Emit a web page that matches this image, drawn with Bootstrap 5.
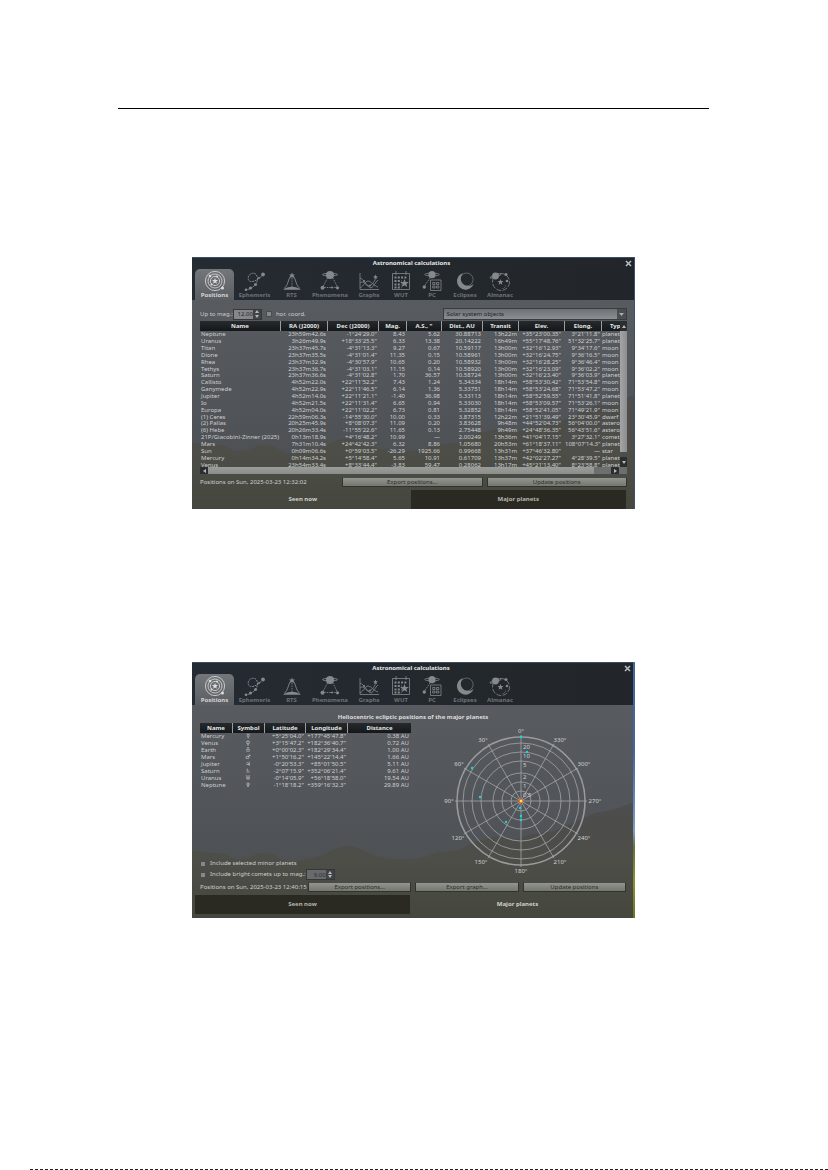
<!DOCTYPE html>
<html lang="en">
<head>
<meta charset="utf-8">
<meta name="viewport" content="width=device-width, initial-scale=1">
<title>Astronomical calculations</title>
<link href="https://cdn.jsdelivr.net/npm/bootstrap@5.3.0/dist/css/bootstrap.min.css" rel="stylesheet">
<style>
  body { background: #fff; font-family: "Noto Sans", "DejaVu Sans", sans-serif; font-size: 6px; line-height: 7px; color: #cdcfd0; }
  button, input, select { font: inherit; }
  .sheet { width: 100%; max-width: 829px; padding: 108px 119px 0 118px; }
  .rule { border-top: 1px solid #000; }
  .foot-rule { border-top: 1px dashed #222; margin-left: 30px; }
  .win { width: 100%; max-width: 443px; border-right: 1px solid #3c5068;
    background: url("data:image/svg+xml,%3Csvg xmlns='http://www.w3.org/2000/svg' viewBox='0 0 443 254' preserveAspectRatio='none'%3E%3Cdefs%3E%3ClinearGradient id='g' x2='0' y2='1'%3E%3Cstop offset='.15' stop-color='%23585b5f'/%3E%3Cstop offset='.65' stop-color='%23505357'/%3E%3Cstop offset='1' stop-color='%234c4e50'/%3E%3C/linearGradient%3E%3ClinearGradient id='h' x2='0' y2='1'%3E%3Cstop offset='0' stop-color='%234c4d4d'/%3E%3Cstop offset='.5' stop-color='%234d4e48'/%3E%3Cstop offset='1' stop-color='%2345463d'/%3E%3C/linearGradient%3E%3C/defs%3E%3Cpath fill='url(%23g)' d='M0 0h443v254H0z'/%3E%3Cpath fill='url(%23h)' d='M0 187l14 2 18 1 12 6 14-2 10-5 14 2 12 7 16-1 20-5 14-7 14-3 12 4 16 7 20 3 22-1 18-6 20-2 20-9 20-5 18 4 16-6 24-3 22-10 18-8 21-4 22-8v116H0z'/%3E%3C/svg%3E") center / 100% 100%; }
  .win-edge { border-right: 2px solid; border-image: linear-gradient(#41669c 0 35%, #7f9cc0 66%, #66713f 72%, #8a922c 86%, #6c7024) 1; }
  .win-top { background: linear-gradient(90deg, #252b32, #22262a); border-top: 1px solid #3b4e63; }
  .win-title { height: 11px; color: #e6e8e9; padding-left: 8px; }
  .close-x { width: 11px; height: 11px; padding: 2px; border: 0; background: none; color: #b9bec2; line-height: 0; }
  .tabs { display: grid; grid-template-columns: 39px 41px 33px 44px 34px 30px 32px 34px 36px; padding-left: 3px; }
  .tab-btn { height: 31px; padding: 0; border: 0; background: none; color: #6d7276; font-weight: 700; white-space: nowrap; overflow: visible; }
  .tab-btn svg { width: 22px; height: 22px; color: #85898c; display: block; margin: 0 auto; }
  .tab-btn.active { background: linear-gradient(#74777a, #5a5d61); border-radius: 5px 5px 0 0; color: #d2d4d5; }
  .tab-btn.active svg { color: #dcdddd; }
  .body-pad { padding: 0 7px 0 8px; }
  .ctl-row { height: 12px; margin-top: 8px; }
  .spin { width: 29px; height: 11px; border: 1px solid #35383a; background: #77797b; }
  .spin input { width: 19px; min-width: 0; padding: 0; border: 0; text-align: right; background: #85878a; color: #24272a; height: 9px; outline: 0; }
  .spin.off input { background: #686a6c; color: #2d2f31; }
  .spin .steps { width: 8px; background: #414446; color: #b5b7b8; }
  .steps button { border: 0; padding: 0; background: none; color: inherit; line-height: 0; flex: 1; }
  .tick { appearance: none; width: 6px; height: 6px; margin: 0; border: 1px solid #4a4d4f; background: #85878a; }
  .combo { width: 43%; height: 12px; padding: 0 14px 0 2px; border: 1px solid #3a3d40; border-radius: 0; color: #212427; appearance: none; line-height: 9px;
    background: url("data:image/svg+xml,%3Csvg xmlns='http://www.w3.org/2000/svg' width='9' height='10'%3E%3Cpath fill='%234b4e51' d='M0 0h9v10H0z'/%3E%3Cpath fill='%23a9abad' d='M2 4h5L4.500 7z'/%3E%3C/svg%3E") right / 9px 10px no-repeat, linear-gradient(#6d7074, #8b8e93); }
  .grid-tbl { table-layout: fixed; border-collapse: separate; border-spacing: 0; line-height: 6px; }
  .grid-tbl td { padding: 0 2px 0 0; text-align: right; white-space: nowrap; }
  .grid-tbl td:first-child { padding: 0 0 0 1px; text-align: left; }
  .grid-tbl th { height: 10px; padding: 0; background: linear-gradient(#262a2d, #15181a); color: #e4e5e6; text-align: center; border-right: 1px solid #9a9c9e; white-space: nowrap; }
  .grid-tbl th:last-child { border-right: 0; }
  .bodies { width: 442px; height: 147px; }
  .bodies td:nth-child(8) { padding-right: 4px; }
  .bodies td:last-child { text-align: left; }
  .bodies th:last-child { text-align: left; padding-left: 8px; }
  .clip { overflow: hidden; height: 146px; min-width: 0; }
  .vbar { width: 7px; }
  .hbar { height: 7px; background: #6d6f6e; }
  .arrow-btn { border: 0; padding: 0; width: 8px; height: 8px; flex: none; background: #2b2e30; color: #b8babb; line-height: 0; }
  .vbar .arrow-btn { width: 7px; height: 10px; }
  .hbar .arrow-btn { height: 7px; }
  .thumb-v { background: linear-gradient(90deg, #a3a5a6, #8b8d8e); flex: 0 0 121px; }
  .thumb-h { background: linear-gradient(#9b9d9b, #8b8d8a); flex: 0 0 386px; }
  .push { height: 10px; padding: 0; border: 1px solid #31332f; border-top-color: #4a4c48; border-radius: 0; background: linear-gradient(#92948f, #74766f); color: #2b2d2a; line-height: 7px; flex: 1; }
  .status { white-space: nowrap; }
  .status-one { flex: 0 0 142px; }
  .status-two { flex: 0 0 108px; }
  .view-tabs { margin: 0 8px 0 3px; padding-top: 3px; }
  .view-tabs button { flex: 1; height: 19px; border: 0; padding: 0; font-weight: 700; background: transparent; color: #cfd0cb; }
  .view-tabs button.dim { background: #2a2a23; color: #b4b5ad; }
  .majors { width: 211px; height: 65px; }
  .majors td:nth-child(2) { text-align: center; font-family: "DejaVu Sans", sans-serif; }
  .majors-col { flex: 0 0 211px; padding-bottom: 2px; }
  .heading { height: 18px; padding-top: 9px; color: #dcddde; }
  .chart { width: 170px; height: 159px; }
  .chart text { fill: #cfd1d2; font-size: 6px; }
</style>
</head>
<body class="d-flex flex-column min-vh-100">
<svg class="d-none" aria-hidden="true">
  <symbol id="i-positions" viewBox="0 0 22 22"><g fill="none" stroke="currentColor" stroke-width=".8"><circle cx="11" cy="11" r="9.600"/><circle cx="11" cy="11" r="7"/><circle cx="11" cy="11" r="4.600"/></g><path fill="currentColor" d="m11 8 .8 2.100h2.200l-1.700 1.400.6 2.200-1.900-1.200-1.900 1.200.6-2.200L8 10.100h2.200z"/><g fill="currentColor"><circle cx="6" cy="6" r="1.300"/><circle cx="13" cy="6.500" r="1"/><circle cx="18.500" cy="18" r="1.500"/><circle cx="7.500" cy="14.500" r="1"/></g></symbol>
  <symbol id="i-ephemeris" viewBox="0 0 22 22"><path fill="none" stroke="currentColor" stroke-width="1" stroke-dasharray="2 .8" d="M1.500 20C8 19 14 14 13.500 8 13 4 10.500 2.500 7.500 3.500 3.500 5 3 10.500 6.500 11.500c4 .8 8.500-3 13-7"/><g fill="currentColor"><circle cx="2" cy="19.800" r="1.300"/><circle cx="6.500" cy="18" r="1.500"/><circle cx="11.500" cy="14.500" r="1.500"/><circle cx="19" cy="4.500" r="1.900"/><circle cx="15" cy="8" r="1"/></g></symbol>
  <symbol id="i-rts" viewBox="0 0 22 22"><path fill="none" stroke="currentColor" d="M3 18.500C7.500 16 7.500 5.500 11 5.500S14.500 16 19 18.500" stroke-width=".9"/><path fill="none" stroke="currentColor" stroke-dasharray="1.500 1" d="M11 8v9" stroke-width=".8"/><path fill="currentColor" d="M2 19.800c5-4 13-4 18 0zM11 2.500l.8 2.100h2.200l-1.700 1.400.6 2.200L11 7l-1.900 1.200.6-2.200L8 4.600h2.200z"/></symbol>
  <symbol id="i-phenomena" viewBox="0 0 22 22"><path fill="none" stroke="currentColor" stroke-dasharray="1.500 1" d="M8.500 8 3.500 17.500h15L14 8" stroke-width=".9"/><g fill="currentColor"><circle cx="11" cy="5" r="4"/><circle cx="3.500" cy="17.800" r="2"/><circle cx="18.500" cy="17.800" r="1.600"/><circle cx="13" cy="17.500" r="1"/></g><ellipse cx="11" cy="4.600" rx="7.500" ry="1.300" fill="none" stroke="currentColor" stroke-width=".9"/></symbol>
  <symbol id="i-graphs" viewBox="0 0 22 22"><path fill="none" stroke="currentColor" stroke-width=".8" d="M2 3v16.500h19M2 8c4 1 7 9 11 10 3-1 4-6 7-8M2 18c4-2 5-7 8-7s6 5 10 6M2 13c4-3 5 2 8 3s6-4 8-8"/><g fill="currentColor"><path d="m17.500 4.500.7 1.700H20l-1.400 1.100.5 1.800-1.600-1-1.600 1 .5-1.800L15 6.200h1.800z"/><circle cx="6" cy="11" r="1"/><circle cx="12" cy="15.500" r="1"/></g></symbol>
  <symbol id="i-wut" viewBox="0 0 22 22"><path fill="none" stroke="currentColor" d="M2.500 3.500h17v16h-17zM6 1v4M16 1v4" stroke-width=".8"/><path fill="none" stroke="currentColor" stroke-width="2" stroke-dasharray="2 1.300" d="M4.500 7.500h13M4.500 11h7M4.500 14.500h7M4.500 17.500h7"/><path fill="currentColor" d="m14.500 9 1.200 3h3.200l-2.500 2 .9 3.100-2.800-1.800-2.800 1.800.9-3.100-2.500-2h3.200z"/></symbol>
  <symbol id="i-pc" viewBox="0 0 22 22"><path fill="none" stroke="currentColor" stroke-width=".8" d="M9.500 10h10.500v10.500H9.500zM11.700 12.500h2.300v2h-2.300zM15.500 12.500h2.300v2h-2.300zM11.700 16h2.300v2h-2.300zM15.500 16h2.300v2h-2.300z"/><path fill="none" stroke="currentColor" stroke-dasharray="1.500 1" d="M9 8 3.500 16" stroke-width=".9"/><g fill="currentColor"><circle cx="11" cy="4.700" r="3.600"/><circle cx="3.300" cy="17" r="1.700"/></g><ellipse cx="11" cy="4.500" rx="7.300" ry="1.400" fill="none" stroke="currentColor" stroke-width=".8"/></symbol>
  <symbol id="i-eclipses" viewBox="0 0 22 22"><path fill="currentColor" d="M9 3a8.500 8.500 0 1 0 10.500 11A7.500 7.500 0 1 1 9 3z"/><circle cx="12.600" cy="9.500" r="6.500" fill="none" stroke="currentColor" stroke-width=".6"/></symbol>
  <symbol id="i-almanac" viewBox="0 0 22 22"><circle cx="12" cy="12" r="8.500" fill="none" stroke="currentColor" stroke-dasharray="5 1.500" stroke-width=".8"/><g fill="currentColor"><circle cx="6.500" cy="6" r="3.400"/><circle cx="17" cy="4.500" r="1.500"/><path d="m11.500 9 .8 2.100h2.200l-1.700 1.400.6 2.200-1.900-1.200-1.900 1.200.6-2.200-1.700-1.400h2.200zM17 14a4.500 4.500 0 0 1-5 5 6 6 0 0 0 5-5z"/><circle cx="18" cy="11" r="1.300"/></g><ellipse cx="6.500" cy="6" rx="5.800" ry="1.200" transform="rotate(-18 6.500 6)" fill="none" stroke="currentColor" stroke-width=".9"/></symbol>
</svg>

<main class="sheet mx-auto">
  <div class="rule"></div>

  <section class="win mx-auto" style="margin-top:148px" aria-label="Positions, seen now">
    <div class="win-top">
      <div class="win-title d-flex align-items-center"><strong class="flex-grow-1 text-center">Astronomical calculations</strong><button class="close-x" aria-label="Close"><svg width="7" height="7" viewBox="0 0 7 7" stroke="currentColor" stroke-width="1.500"><path d="m1 1 5 5M6 1 1 6"/></svg></button></div>
      <nav class="tabs"></nav>
    </div>
    <div class="body-pad">
      <div class="ctl-row d-flex align-items-center">
        <label for="mag">Up to mag.:</label>
        <span class="spin d-flex"><input id="mag" value="12.00"><span class="steps d-flex flex-column"><button aria-label="Increase"><svg width="4" height="3"><path fill="currentColor" d="M0 3h4L2 0z"/></svg></button><button aria-label="Decrease"><svg width="4" height="3"><path fill="currentColor" d="M0 0h4L2 3z"/></svg></button></span></span>
        <input class="tick ms-1" type="checkbox" id="hor"><label for="hor" class="ms-1">hor. coord.</label>
        <select class="combo ms-auto" aria-label="Object type"><option>Solar system objects</option></select>
      </div>
      <div class="d-flex" style="margin-top:1px">
        <div class="clip flex-grow-1">
          <table class="grid-tbl bodies">
            <colgroup><col width="81"><col width="47"><col width="51"><col width="28"><col width="35"><col width="41"><col width="36"><col width="46"><col width="37"><col width="40"></colgroup>
            <thead><tr><th>Name</th><th>RA (J2000)</th><th>Dec (J2000)</th><th>Mag.</th><th>A.S., "</th><th>Dist., AU</th><th>Transit</th><th>Elev.</th><th>Elong.</th><th>Type</th></tr></thead>
            <tbody id="bodies"></tbody>
          </table>
        </div>
        <div class="vbar d-flex flex-column"><button class="arrow-btn" aria-label="Scroll up"><svg width="4" height="3"><path fill="currentColor" d="M0 3h4L2 0z"/></svg></button><div class="thumb-v"></div><button class="arrow-btn mt-auto" aria-label="Scroll down"><svg width="4" height="3"><path fill="currentColor" d="M0 0h4L2 3z"/></svg></button></div>
      </div>
      <div class="hbar d-flex"><button class="arrow-btn" aria-label="Scroll left"><svg width="3" height="4"><path fill="currentColor" d="M3 0v4L0 2z"/></svg></button><div class="thumb-h"></div><button class="arrow-btn ms-auto me-2" aria-label="Scroll right"><svg width="3" height="4"><path fill="currentColor" d="M0 0v4l3-2z"/></svg></button></div>
      <div class="d-flex align-items-center" style="margin-top:3px"><span class="status status-one">Positions on Sun, 2025-03-23 12:32:02</span><button class="push me-1">Export positions...</button><button class="push">Update positions</button></div>
    </div>
    <div class="view-tabs d-flex"><button>Seen now</button><button class="dim">Major planets</button></div>
  </section>

  <section class="win win-edge mx-auto" style="margin-top:153px" aria-label="Positions, major planets">
    <div class="win-top">
      <div class="win-title d-flex align-items-center"><strong class="flex-grow-1 text-center">Astronomical calculations</strong><button class="close-x" aria-label="Close"><svg width="7" height="7" viewBox="0 0 7 7" stroke="currentColor" stroke-width="1.500"><path d="m1 1 5 5M6 1 1 6"/></svg></button></div>
      <nav class="tabs"></nav>
    </div>
    <div class="body-pad">
      <div class="heading text-center fw-bold">Heliocentric ecliptic positions of the major planets</div>
      <div class="d-flex">
        <div class="majors-col d-flex flex-column">
          <table class="grid-tbl majors">
            <colgroup><col width="33"><col width="32"><col width="41"><col width="42"><col width="63"></colgroup>
            <thead><tr><th>Name</th><th>Symbol</th><th>Latitude</th><th>Longitude</th><th>Distance</th></tr></thead>
            <tbody id="majors"></tbody>
          </table>
          <div class="mt-auto d-flex align-items-center"><input class="tick" type="checkbox" id="minor"><label for="minor" class="ms-1">Include selected minor planets</label></div>
          <div class="d-flex align-items-center" style="margin-top:2px"><input class="tick" type="checkbox" id="comets"><label for="comets" class="ms-1">Include bright comets up to mag.:</label><span class="spin off d-flex"><input aria-label="Comet magnitude" value="9.00" disabled><span class="steps d-flex flex-column"><button aria-label="Increase"><svg width="4" height="3"><path fill="currentColor" d="M0 3h4L2 0z"/></svg></button><button aria-label="Decrease"><svg width="4" height="3"><path fill="currentColor" d="M0 0h4L2 3z"/></svg></button></span></span></div>
        </div>
        <div class="flex-grow-1 text-center ps-1"><svg class="chart" id="chart" viewBox="-85 -78 170 159"></svg></div>
      </div>
      <div class="d-flex align-items-center"><span class="status status-two">Positions on Sun, 2025-03-23 12:40:15</span><button class="push me-1">Export positions...</button><button class="push me-1">Export graph...</button><button class="push">Update positions</button></div>
    </div>
    <div class="view-tabs d-flex pb-1"><button class="dim">Seen now</button><button>Major planets</button></div>
  </section>
</main>
<div class="foot-rule mt-auto"></div>

<script src="https://cdn.jsdelivr.net/npm/bootstrap@5.3.0/dist/js/bootstrap.bundle.min.js"></script>
<script>
const names = ['Positions','Ephemeris','RTS','Phenomena','Graphs','WUT','PC','Eclipses','Almanac'];
document.querySelectorAll('.tabs').forEach(n => n.innerHTML = names.map((t, i) =>
  `<button class="tab-btn${i ? '' : ' active'}"><svg><use href="#i-${t.toLowerCase()}"/></svg>${t}</button>`).join(''));

const fill = (id, text) => document.getElementById(id).innerHTML = text.trim().split('\n')
  .map(r => '<tr>' + r.split('|').map(c => `<td>${c}</td>`).join('') + '</tr>').join('');
fill('bodies', `
Neptune|23h59m42.6s|-1°24'29.0"|8.43|5.62|30.88713|13h22m|+35°23'00.35"|3°21'11.8"|planet
Uranus|3h26m49.9s|+18°33'25.5"|6.33|13.38|20.14222|16h49m|+55°17'48.76"|51°32'25.7"|planet
Titan|23h37m45.7s|-4°31'13.3"|9.27|0.67|10.59117|13h00m|+32°16'12.93"|9°34'17.6"|moon
Dione|23h37m35.5s|-4°31'01.4"|11.35|0.15|10.58961|13h00m|+32°16'24.75"|9°36'16.5"|moon
Rhea|23h37m32.9s|-4°30'57.9"|10.65|0.20|10.58932|13h00m|+32°16'28.25"|9°36'46.4"|moon
Tethys|23h37m36.7s|-4°31'03.1"|11.15|0.14|10.58920|13h00m|+32°16'23.09"|9°36'02.2"|moon
Saturn|23h37m36.6s|-4°31'02.8"|1.70|36.57|10.58724|13h00m|+32°16'23.40"|9°36'03.9"|planet
Callisto|4h52m22.0s|+22°11'52.2"|7.43|1.24|5.34334|18h14m|+58°53'30.42"|71°53'54.8"|moon
Ganymede|4h52m22.9s|+22°11'46.5"|6.14|1.36|5.33751|18h14m|+58°53'24.68"|71°53'47.2"|moon
Jupiter|4h52m14.0s|+22°11'21.1"|-1.40|36.98|5.33113|18h14m|+58°52'59.55"|71°51'41.8"|planet
Io|4h52m21.5s|+22°11'31.4"|6.65|0.94|5.33030|18h14m|+58°53'09.57"|71°53'26.1"|moon
Europa|4h52m04.0s|+22°11'02.2"|6.73|0.81|5.32852|18h14m|+58°52'41.05"|71°49'21.9"|moon
(1) Ceres|22h59m06.3s|-14°55'30.0"|10.00|0.33|3.87315|12h22m|+21°51'39.49"|23°30'45.9"|dwarf planet
(2) Pallas|20h25m45.9s|+8°08'07.3"|11.09|0.20|3.83628|9h48m|+44°52'04.73"|56°04'00.0"|asteroid
(6) Hebe|20h26m33.4s|-11°55'22.6"|11.65|0.13|2.75448|9h49m|+24°48'36.35"|56°43'51.6"|asteroid
21P/Giacobini-Zinner (2025)|0h13m18.9s|+4°16'48.2"|10.99|—|2.00249|13h36m|+41°04'17.15"|3°27'32.1"|comet
Mars|7h31m10.4s|+24°42'42.3"|6.32|8.86|1.05680|20h53m|+61°18'37.11"|108°07'14.3"|planet
Sun|0h09m06.6s|+0°59'03.5"|-26.29|1925.66|0.99668|13h31m|+37°46'32.80"|—|star
Mercury|0h14m34.2s|+5°14'58.4"|5.65|10.91|0.61709|13h37m|+42°02'27.27"|4°28'39.5"|planet
Venus|23h54m33.4s|+8°33'44.4"|-3.83|59.47|0.28062|13h17m|+45°21'13.40"|8°23'58.8"|planet`);
fill('majors', `
Mercury|☿|+5°25'04.0"|+177°45'47.8"|0.38 AU
Venus|♀|+3°15'47.2"|+182°36'40.7"|0.72 AU
Earth|♁|+0°00'02.3"|+182°29'34.4"|1.00 AU
Mars|♂|+1°50'16.2"|+145°22'14.4"|1.66 AU
Jupiter|♃|-0°20'53.3"|+85°01'50.5"|5.11 AU
Saturn|♄|-2°07'15.9"|+352°06'21.4"|9.61 AU
Uranus|♅|-0°14'05.9"|+56°18'58.0"|19.54 AU
Neptune|♆|-1°18'18.2"|+359°16'32.3"|29.89 AU`);

// Polar chart: zero degrees at the top, angles run counter-clockwise
let s = '<g fill="none" stroke="#a3a5a7" stroke-width=".8">';
[10, 19, 28, 40, 49, 58].forEach(r => s += `<circle r="${r}"/>`);
s += '<circle r="64" stroke-width="1.600" stroke="#999b9d"/>';
for (let a = 0; a < 360; a += 30) {
  const t = a * Math.PI / 180;
  s += `<path d="M0 0L${-66 * Math.sin(t)} ${-66 * Math.cos(t)}"/>`;
}
s += '</g>';
[[0,-70],[-38,-61],[-62,-37],[-72,0],[-63,37],[-40,61],[0,70],[39,61],[63,37],[74,0],[63,-37],[39,-61]]
  .forEach(([x, y], i) => s += `<text x="${x}" y="${y + 2}" text-anchor="middle">${i * 30}°</text>`);
[['20',-54],['10',-45],['5',-36],['2',-24],['1',-15],['0.5',-6]].forEach(([t, y]) => s += `<text x="2" y="${y + 2}">${t}</text>`);
[[0,-64],[6,-49],[-49,-33],[-41,-4],[-1,7],[0,15],[0,19],[-15,21]].forEach(([x, y]) => s += `<circle cx="${x}" cy="${y}" r="1.200" fill="#12dbe2"/>`);
s += '<circle r="2" fill="#ffe63a" stroke="#e8501c" stroke-width="1"/>';
document.getElementById('chart').innerHTML = s;
</script>
</body>
</html>
